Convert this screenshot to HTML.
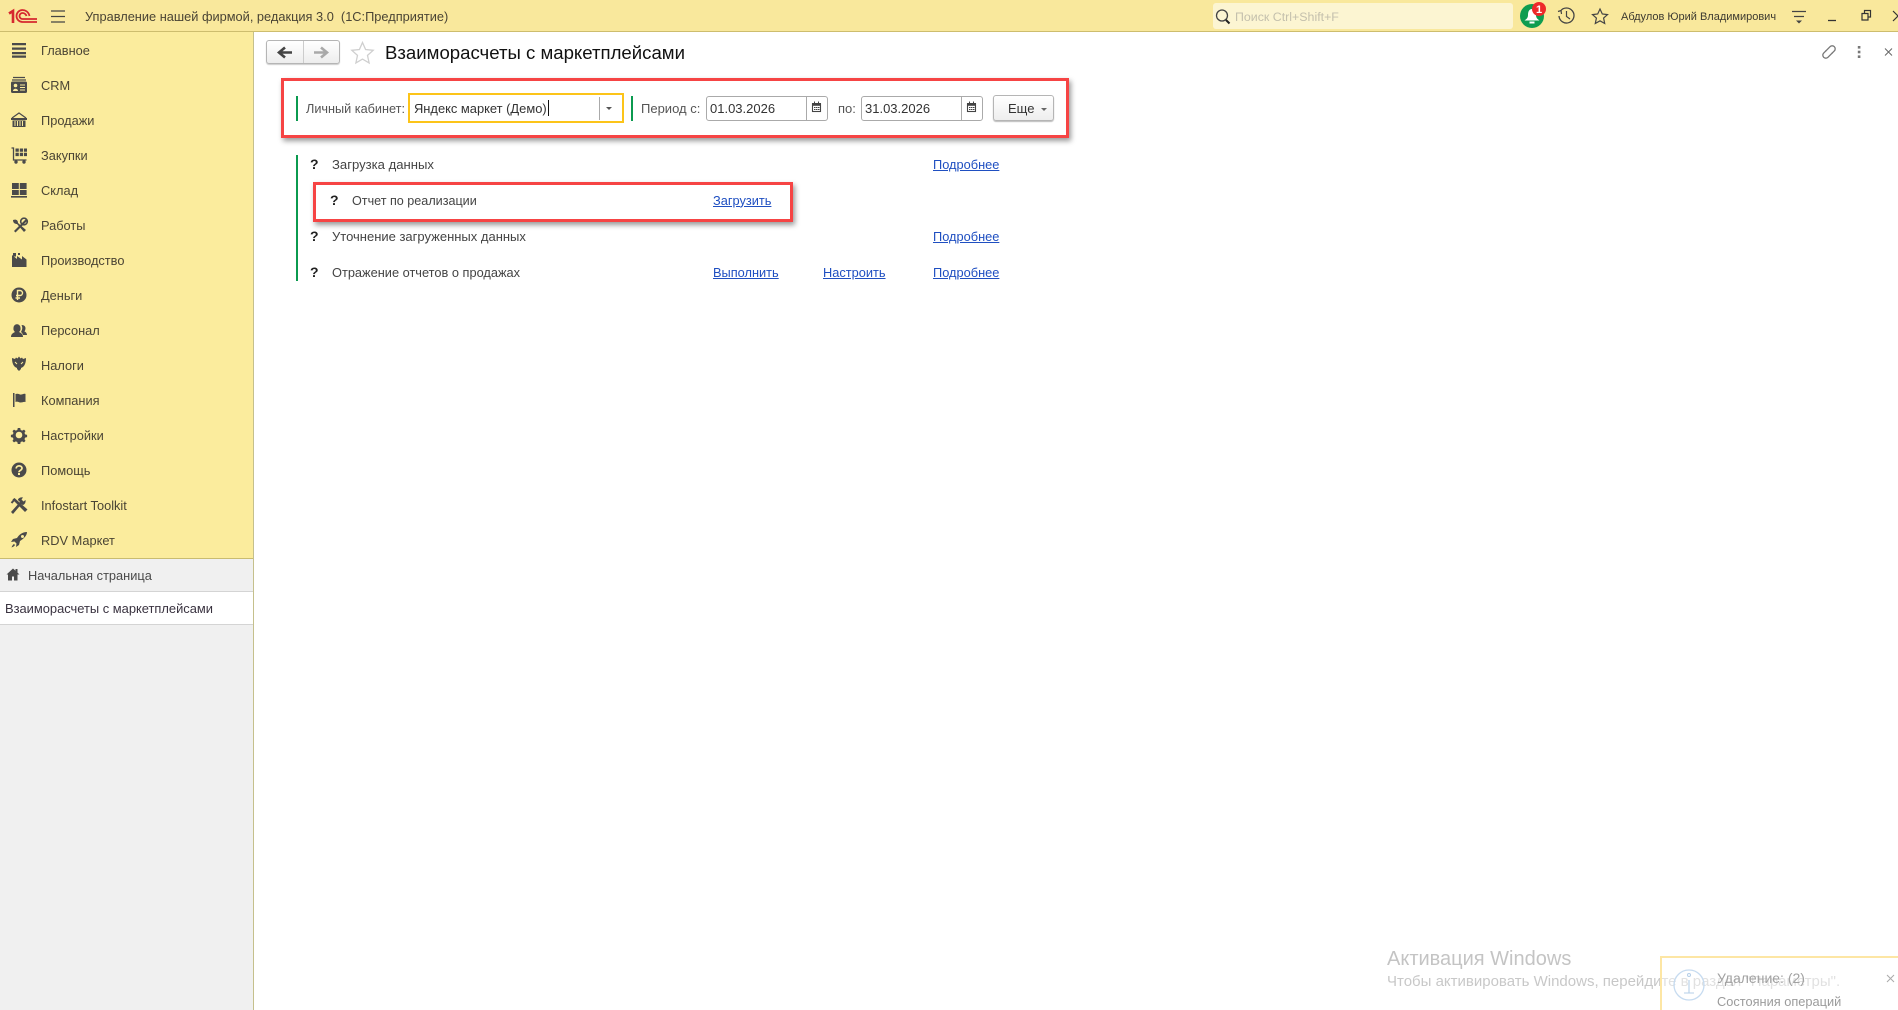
<!DOCTYPE html>
<html lang="ru"><head><meta charset="utf-8"><title>Взаиморасчеты с маркетплейсами</title>
<style>
html,body{margin:0;padding:0;width:1898px;height:1010px;overflow:hidden;background:#fff;font-family:"Liberation Sans",Arial,sans-serif;font-size:13px;color:#333}
.b{position:absolute;box-sizing:border-box}
.t{position:absolute;white-space:nowrap;line-height:16px;margin-top:-8px}
.m{left:41px;color:#4a4434;font-size:12.8px}
a.t{color:#1f4fc1;text-decoration:underline;font-size:12.8px}
svg{position:absolute;left:0;top:0}
.red{border:3px solid #f64444;box-shadow:2px 3px 5px rgba(0,0,0,.4)}
.dt{border:1px solid #aaa;border-radius:3px;background:#fff}
</style></head><body>
<div class="b" style="left:0;top:0;width:1898px;height:32px;background:#f9e89c;border-bottom:1px solid #cdbd6e"></div>
<div class="b" style="left:0;top:32px;width:254px;height:978px;background:#f0f0f0;border-right:1px solid #c5c08c"></div>
<div class="b" style="left:0;top:32px;width:253px;height:527px;background:#fbec9d;border-bottom:1px solid #c9bc70"></div>
<div class="b" style="left:0;top:591px;width:253px;height:34px;background:#fff;border-top:1px solid #d4d4d4;border-bottom:1px solid #d4d4d4"></div>
<div class="b" style="left:1213px;top:3px;width:300px;height:26px;background:#fcf5d2;border-radius:3px"></div>

<span class="t" style="left:85px;top:16.5px;font-size:12.8px;color:#4a4434">Управление нашей фирмой, редакция 3.0&nbsp; (1С:Предприятие)</span>
<span class="t" style="left:1235px;top:16.5px;color:#c4c0ad;font-size:12.4px">Поиск Ctrl+Shift+F</span>
<span class="t" style="left:1621px;top:16.5px;font-size:11px;color:#3d3a30">Абдулов Юрий Владимирович</span>

<span class="t m" style="top:50.5px">Главное</span>
<span class="t m" style="top:85.5px">CRM</span>
<span class="t m" style="top:120.5px">Продажи</span>
<span class="t m" style="top:155.5px">Закупки</span>
<span class="t m" style="top:190.5px">Склад</span>
<span class="t m" style="top:225.5px">Работы</span>
<span class="t m" style="top:260.5px">Производство</span>
<span class="t m" style="top:295.5px">Деньги</span>
<span class="t m" style="top:330.5px">Персонал</span>
<span class="t m" style="top:365.5px">Налоги</span>
<span class="t m" style="top:400.5px">Компания</span>
<span class="t m" style="top:435.5px">Настройки</span>
<span class="t m" style="top:470.5px">Помощь</span>
<span class="t m" style="top:505.5px">Infostart Toolkit</span>
<span class="t m" style="top:540.5px">RDV Маркет</span>
<span class="t" style="left:28px;top:575.5px;color:#4a4a4a;font-size:12.8px">Начальная страница</span>
<span class="t" style="left:5px;top:608.5px;color:#3a3340;font-size:12.9px">Взаиморасчеты с маркетплейсами</span>

<div class="b" style="left:266px;top:40px;width:74px;height:24px;border:1px solid #b5b5b5;border-radius:3px;background:linear-gradient(#fff,#ededed);box-shadow:0 1px 1px #ccc"></div>
<div class="b" style="left:303px;top:41px;width:1px;height:22px;background:#ccc"></div>
<span class="t" style="left:385px;top:52.5px;font-size:18.6px;color:#111;line-height:20px;margin-top:-10px">Взаиморасчеты с маркетплейсами</span>

<div class="b red" style="left:281px;top:78px;width:788px;height:60px"></div>
<div class="b" style="left:296px;top:96px;width:2px;height:25px;background:#0b9a4f"></div>
<span class="t" style="left:306px;top:108.5px;color:#555;font-size:12.7px">Личный кабинет:</span>
<div class="b" style="left:408px;top:93px;width:216px;height:30px;border:2px solid #fcc419;background:#fff"></div>
<span class="t" style="left:414px;top:108.5px;color:#333;font-size:12.9px">Яндекс маркет (Демо)</span>
<div class="b" style="left:548px;top:100px;width:1px;height:16px;background:#111"></div>
<div class="b" style="left:599px;top:97px;width:1px;height:23px;background:#aaa"></div>
<div class="b" style="left:631px;top:96px;width:2px;height:25px;background:#0b9a4f"></div>
<span class="t" style="left:641px;top:108.5px;color:#555">Период с:</span>
<div class="b dt" style="left:706px;top:96px;width:122px;height:25px"></div>
<div class="b" style="left:806px;top:97px;width:1px;height:23px;background:#aaa"></div>
<span class="t" style="left:710px;top:108.500px;color:#333">01.03.2026</span>
<span class="t" style="left:838px;top:108.5px;color:#555">по:</span>
<div class="b dt" style="left:861px;top:96px;width:122px;height:25px"></div>
<div class="b" style="left:961px;top:97px;width:1px;height:23px;background:#aaa"></div>
<span class="t" style="left:865px;top:108.500px;color:#333">31.03.2026</span>
<div class="b" style="left:993px;top:95px;width:61px;height:26px;border:1px solid #b5b5b5;border-radius:3px;background:linear-gradient(#fff,#eee);box-shadow:0 1px 1px #bbb"></div>
<span class="t" style="left:1008px;top:108.5px;color:#333">Еще</span>

<div class="b" style="left:296px;top:155px;width:2px;height:126px;background:#0b9a4f"></div>
<div class="b red" style="left:313px;top:182px;width:480px;height:40px"></div>
<span class="t" style="left:310px;top:164px;font-weight:bold;color:#222;font-size:14px">?</span>
<span class="t" style="left:332px;top:164.5px;color:#444;font-size:13.1px">Загрузка данных</span>
<span class="t" style="left:330px;top:200px;font-weight:bold;color:#222;font-size:14px">?</span>
<span class="t" style="left:352px;top:200.5px;color:#444;font-size:12.6px">Отчет по реализации</span>
<span class="t" style="left:310px;top:236px;font-weight:bold;color:#222;font-size:14px">?</span>
<span class="t" style="left:332px;top:236.5px;color:#444">Уточнение загруженных данных</span>
<span class="t" style="left:310px;top:272px;font-weight:bold;color:#222;font-size:14px">?</span>
<span class="t" style="left:332px;top:272.5px;color:#444;font-size:12.8px">Отражение отчетов о продажах</span>
<a class="t" style="left:933px;top:164.5px">Подробнее</a>
<a class="t" style="left:713px;top:200.5px">Загрузить</a>
<a class="t" style="left:933px;top:236.5px">Подробнее</a>
<a class="t" style="left:713px;top:272.5px">Выполнить</a>
<a class="t" style="left:823px;top:272.5px">Настроить</a>
<a class="t" style="left:933px;top:272.5px">Подробнее</a>

<span class="t" style="left:1387px;top:959px;font-size:20px;line-height:24px;margin-top:-12px;color:#c4c4c4">Активация Windows</span>
<span class="t" style="left:1387px;top:982px;font-size:15px;line-height:18px;margin-top:-9px;color:#c8c8c8">Чтобы активировать Windows, перейдите в раздел "Параметры".</span>
<div class="b" style="left:1660px;top:956px;width:238px;height:54px;border:2px solid #fde6a4;border-right:none;border-bottom:none;background:rgba(255,255,255,.45)"></div>
<span class="t" style="left:1717px;top:978px;color:#a2a2a2;font-size:14px">Удаление: (2)</span>
<span class="t" style="left:1717px;top:1002px;color:#9b9b9b;font-size:12.8px">Состояния операций</span>

<svg width="1898" height="1010" viewBox="0 0 1898 1010" fill="none">
<!-- 1C logo -->
<path d="M9 13.500l4-2.500v12" stroke="#d6282f" stroke-width="2.600"/>
<path d="M29.500 16C28.500 11.500 25 10 22.500 10A6 6 0 0 0 22.500 22H37M26.500 16C26 14.500 24.500 13 22.500 13A3 3 0 0 0 22.500 19H37" stroke="#d6282f" stroke-width="1.800"/>
<!-- menu -->
<path d="M51 11h14M51 16.500h14M51 22h14" stroke="#444" stroke-width="1.2"/>
<!-- search -->
<circle cx="1222" cy="15.500" r="5.500" stroke="#444" stroke-width="1.300"/>
<path d="M1226 20l3.500 3.500" stroke="#222" stroke-width="2"/>
<!-- bell -->
<circle cx="1532" cy="16" r="12" fill="#0f9d50"/>
<path d="M1532 9c-3 0-4 3-4 6 0 3-1.500 4-3.500 5.500h15c-2-1.500-3.500-2.500-3.500-5.500 0-3-1-6-4-6z" fill="#fff"/>
<rect x="1529.500" y="21.500" width="5" height="2" fill="#fff"/>
<circle cx="1539" cy="9" r="7" fill="#ee2a2a"/>
<text x="1539" y="13" font-family="Liberation Sans" font-size="11" font-weight="bold" fill="#fff" text-anchor="middle">1</text>
<!-- history -->
<path d="M1560.500 11a7.500 7.500 0 1 1-1.500 5" stroke="#444" stroke-width="1.300"/>
<path d="M1558 11.500l3-1 .5 3.500M1566.500 11v5.500l3.500 2.500" stroke="#444" stroke-width="1.200"/>
<!-- star -->
<path d="M1600 9l2.300 5 5.200.6-3.900 3.500 1.100 5.400-4.700-2.700-4.700 2.700 1.100-5.400-3.900-3.500 5.200-.6z" stroke="#444" stroke-width="1.200"/>
<!-- panel menu -->
<path d="M1792 11.500h14M1794 16.500h10" stroke="#444" stroke-width="1.200"/><path d="M1796 20.500h6l-3 3z" fill="#444"/>
<!-- window -->
<path d="M1828 20.500h8" stroke="#333" stroke-width="1.300"/>
<path d="M1862 13.500h6v6.500h-6zM1864.500 13v-2.500h6v6.500h-2.500" stroke="#333" stroke-width="1.200"/>
<path d="M1893 11l5 5M1893 21l5-5" stroke="#333" stroke-width="1.200"/>
<!-- nav arrows -->
<path d="M279 52.500h13M285 47.500l-6 5 6 5" stroke="#444" stroke-width="2.600"/>
<path d="M314 52.500h13M321 47.500l6 5-6 5" stroke="#a9a9a9" stroke-width="2.600"/>
<!-- title star -->
<path d="M362.500 42.500l3.100 7 7.600.8-5.700 5.100 1.600 7.500-6.600-3.800-6.600 3.800 1.600-7.500-5.700-5.100 7.600-.8z" stroke="#cfcfcf" stroke-width="1.300"/>
<!-- top right icons -->
<g transform="rotate(-45 1829 52)" stroke="#777" stroke-width="1.300"><path d="M1827 49h6.500a3 3 0 0 1 0 6H1830"/><path d="M1831 55h-6.500a3 3 0 0 1 0-6H1828"/></g>
<rect x="1857.800" y="46" width="2.600" height="2.600" fill="#777"/><rect x="1857.800" y="50.700" width="2.600" height="2.600" fill="#777"/><rect x="1857.800" y="55.400" width="2.600" height="2.600" fill="#777"/>
<path d="M1885 48.500l7 7M1892 48.500l-7 7" stroke="#666" stroke-width="1"/>
<!-- dropdown arrows -->
<path d="M606 107h6l-3 3z" fill="#555"/>
<path d="M1041 108h6l-3 3z" fill="#666"/>
<!-- calendars -->
<g><rect x="812.500" y="104" width="8" height="7.500" stroke="#444" stroke-width="1.100" fill="#fff"/><rect x="812" y="103" width="9" height="2.800" fill="#444"/><path d="M814.500 101.500v2M818.500 101.500v2M814 107.500h1.500M816 107.500h1.500M818 107.500h1.500M814 109.500h1.500M816 109.500h1.500M818 109.500h1.500" stroke="#444" stroke-width="1"/></g>
<g transform="translate(155 0)"><rect x="812.500" y="104" width="8" height="7.500" stroke="#444" stroke-width="1.100" fill="#fff"/><rect x="812" y="103" width="9" height="2.800" fill="#444"/><path d="M814.500 101.500v2M818.500 101.500v2M814 107.500h1.500M816 107.500h1.500M818 107.500h1.500M814 109.500h1.500M816 109.500h1.500M818 109.500h1.500" stroke="#444" stroke-width="1"/></g>
<!-- notification -->
<circle cx="1689" cy="985" r="15" stroke="#c6dbf0" stroke-width="1.300" fill="none"/>
<circle cx="1689" cy="975" r="1.500" stroke="#b5cfe8"/>
<path d="M1689 980v13M1684 993h10" stroke="#b5cfe8" stroke-width="1.100"/>
<path d="M1887 975l7 7M1894 975l-7 7" stroke="#aaa" stroke-width="1"/>

<g fill="#4a4a4a">
<!-- Главное -->
<path d="M12 43h14v2.300H12zM12 47.500h14v2.300H12zM12 52h14v2.300H12zM12 55.500h14v2.300H12z"/>
<!-- CRM -->
<path d="M13 77.500h12M12 80h14" stroke="#4a4a4a" stroke-width="1.300"/>
<rect x="11" y="81.500" width="16" height="11.500" rx="1.500"/>
<circle cx="15.500" cy="85.500" r="1.800" fill="#fbec9d"/><path d="M13 91c0-3 5-3 5 0z" fill="#fbec9d"/><path d="M20 85h5M20 87.500h5M20 90h5" stroke="#fbec9d" stroke-width="1"/>
<!-- Продажи -->
<path d="M12 118l7-5 7 5" stroke="#4a4a4a" stroke-width="1.200" fill="none"/>
<path d="M11 118h16v2H11zM12.500 120.500h13v6.500h-13z"/>
<path d="M15 121v5M17.500 121v5M20 121v5M22.500 121v5" stroke="#fbec9d" stroke-width="1"/>
<!-- Закупки -->
<path d="M11.500 148h2v12h13" stroke="#4a4a4a" stroke-width="1.300" fill="none"/>
<path d="M15.500 148.500h3.300v3.300h-3.300zM19.800 148.500h3.300v3.300h-3.300zM24 148.500h3v3.300h-3zM15.500 152.800h3.300v3.300h-3.300zM19.800 152.800h3.300v3.300h-3.300zM24 152.800h3v3.300h-3z"/>
<circle cx="16" cy="162" r="1.700"/><circle cx="24" cy="162" r="1.700"/>
<!-- Склад -->
<path d="M12 183h6.800v6H12zM19.800 183h6.800v6h-6.800zM12 190h6.800v5H12zM19.800 190h6.800v5h-6.800zM11 196h16v1.600H11z"/>
<!-- Работы -->
<path d="M13 220c0 3 2 4 4 4l7 8 2-2-8-7c0-3-2-4-5-3z" />
<path d="M26 219l-12 12 1.500 1.500 12-12z"/><circle cx="24" cy="221.500" r="3.300" fill="none" stroke="#4a4a4a" stroke-width="1.600"/>
<!-- Производство -->
<path d="M12 266v-11l5 4v-3l5 3.500V256l4.500 3.500V267H12z"/>
<path d="M13 253h3v3.500h-3zM18 253h2v2h-2z"/>
<!-- Деньги -->
<circle cx="19" cy="295" r="7.500"/>
<path d="M17.500 300v-9.500h2.500a2.400 2.400 0 0 1 0 5h-4M15.500 298h4.500" stroke="#fbec9d" stroke-width="1.400" fill="none"/>
<!-- Персонал -->
<path d="M11 337c0-3 2-4 4-5a4 4 0 0 1-1.500-4c0-5 7-5 7 0a4 4 0 0 1-1.500 4c2 1 4 2 4 5z"/>
<path d="M21.500 325c4 0 5 3 3 6.500 1.500.5 2.500 2 2.500 3.500h-4c-.5-2-2-3-2-3 1-2 2-4 .5-7z"/>
<!-- Налоги -->
<path d="M12 358c0 6 2 9 5 10v1l2 2 2-2v-1c3-1 5-4 5-10l-3 1-1-1.500-1.500 1-1.500-2-1.500 2-1.500-1-1 1.500z"/>
<path d="M15 362l2 2M23 362l-2 2" stroke="#fbec9d" stroke-width="1"/>
<!-- Компания -->
<path d="M13 393h1.500v14H13zM15.500 394c3-1 4 1 6 .5s3-1 4-.5v8c-2-.5-3 .5-5 .5s-3-1.500-5-.5z"/>
<!-- Настройки -->
<path d="M17.800 428h2.400l.5 2 1.500.6 1.800-1 1.500 1.500-1 1.800.6 1.500 2 .5v2.200l-2 .5-.6 1.500 1 1.800-1.500 1.500-1.800-1-1.500.6-.5 2h-2.400l-.5-2-1.500-.6-1.800 1-1.500-1.500 1-1.800-.6-1.500-2-.5v-2.200l2-.5.6-1.500-1-1.800 1.500-1.500 1.800 1 1.500-.6z"/>
<circle cx="19" cy="435" r="3.300" fill="#fbec9d"/>
<!-- Помощь -->
<circle cx="19" cy="470" r="7.500"/>
<path d="M16.200 468.500c0-3.500 5.800-3.500 5.800-.2 0 2-3 2-3 3.900" stroke="#fbec9d" stroke-width="1.700" fill="none"/>
<rect x="18" y="473" width="2" height="2" fill="#fbec9d"/>
<!-- Infostart -->
<path d="M12.500 499.500l2-1.500 13 11.500-2.500 2.500z"/>
<path d="M11 512l9-10-2-2c0-2 3-3 5-2.500l-1.500 2 2 2 2-1.500c.5 2.500-1 5-3 5l-1-1-8.500 10z"/>
<path d="M11.500 503l3-3.500" stroke="#4a4a4a" stroke-width="2"/>
<!-- RDV -->
<path d="M27 532c-5 0-8 3-10 6l-4 1-2 3 3.500-.5 2 2-.5 3.500 3-2 1-4c3-2 7-5 7-9z"/>
<path d="M14 544c-1 .5-2 2-2.500 3.500 1.500-.5 3-1.500 3.500-2.500z"/>
<circle cx="22.500" cy="536.500" r="1.500" fill="#fbec9d"/>
<!-- Home -->
<path transform="translate(-6 -1)" d="M12.500 575.500L19 569.500l2.500 2.300v-1.800h2v3.600l2 1.900h-2v6h-3.500v-4h-2v4H14v-6z"/>
</g>
</svg>
</body></html>
